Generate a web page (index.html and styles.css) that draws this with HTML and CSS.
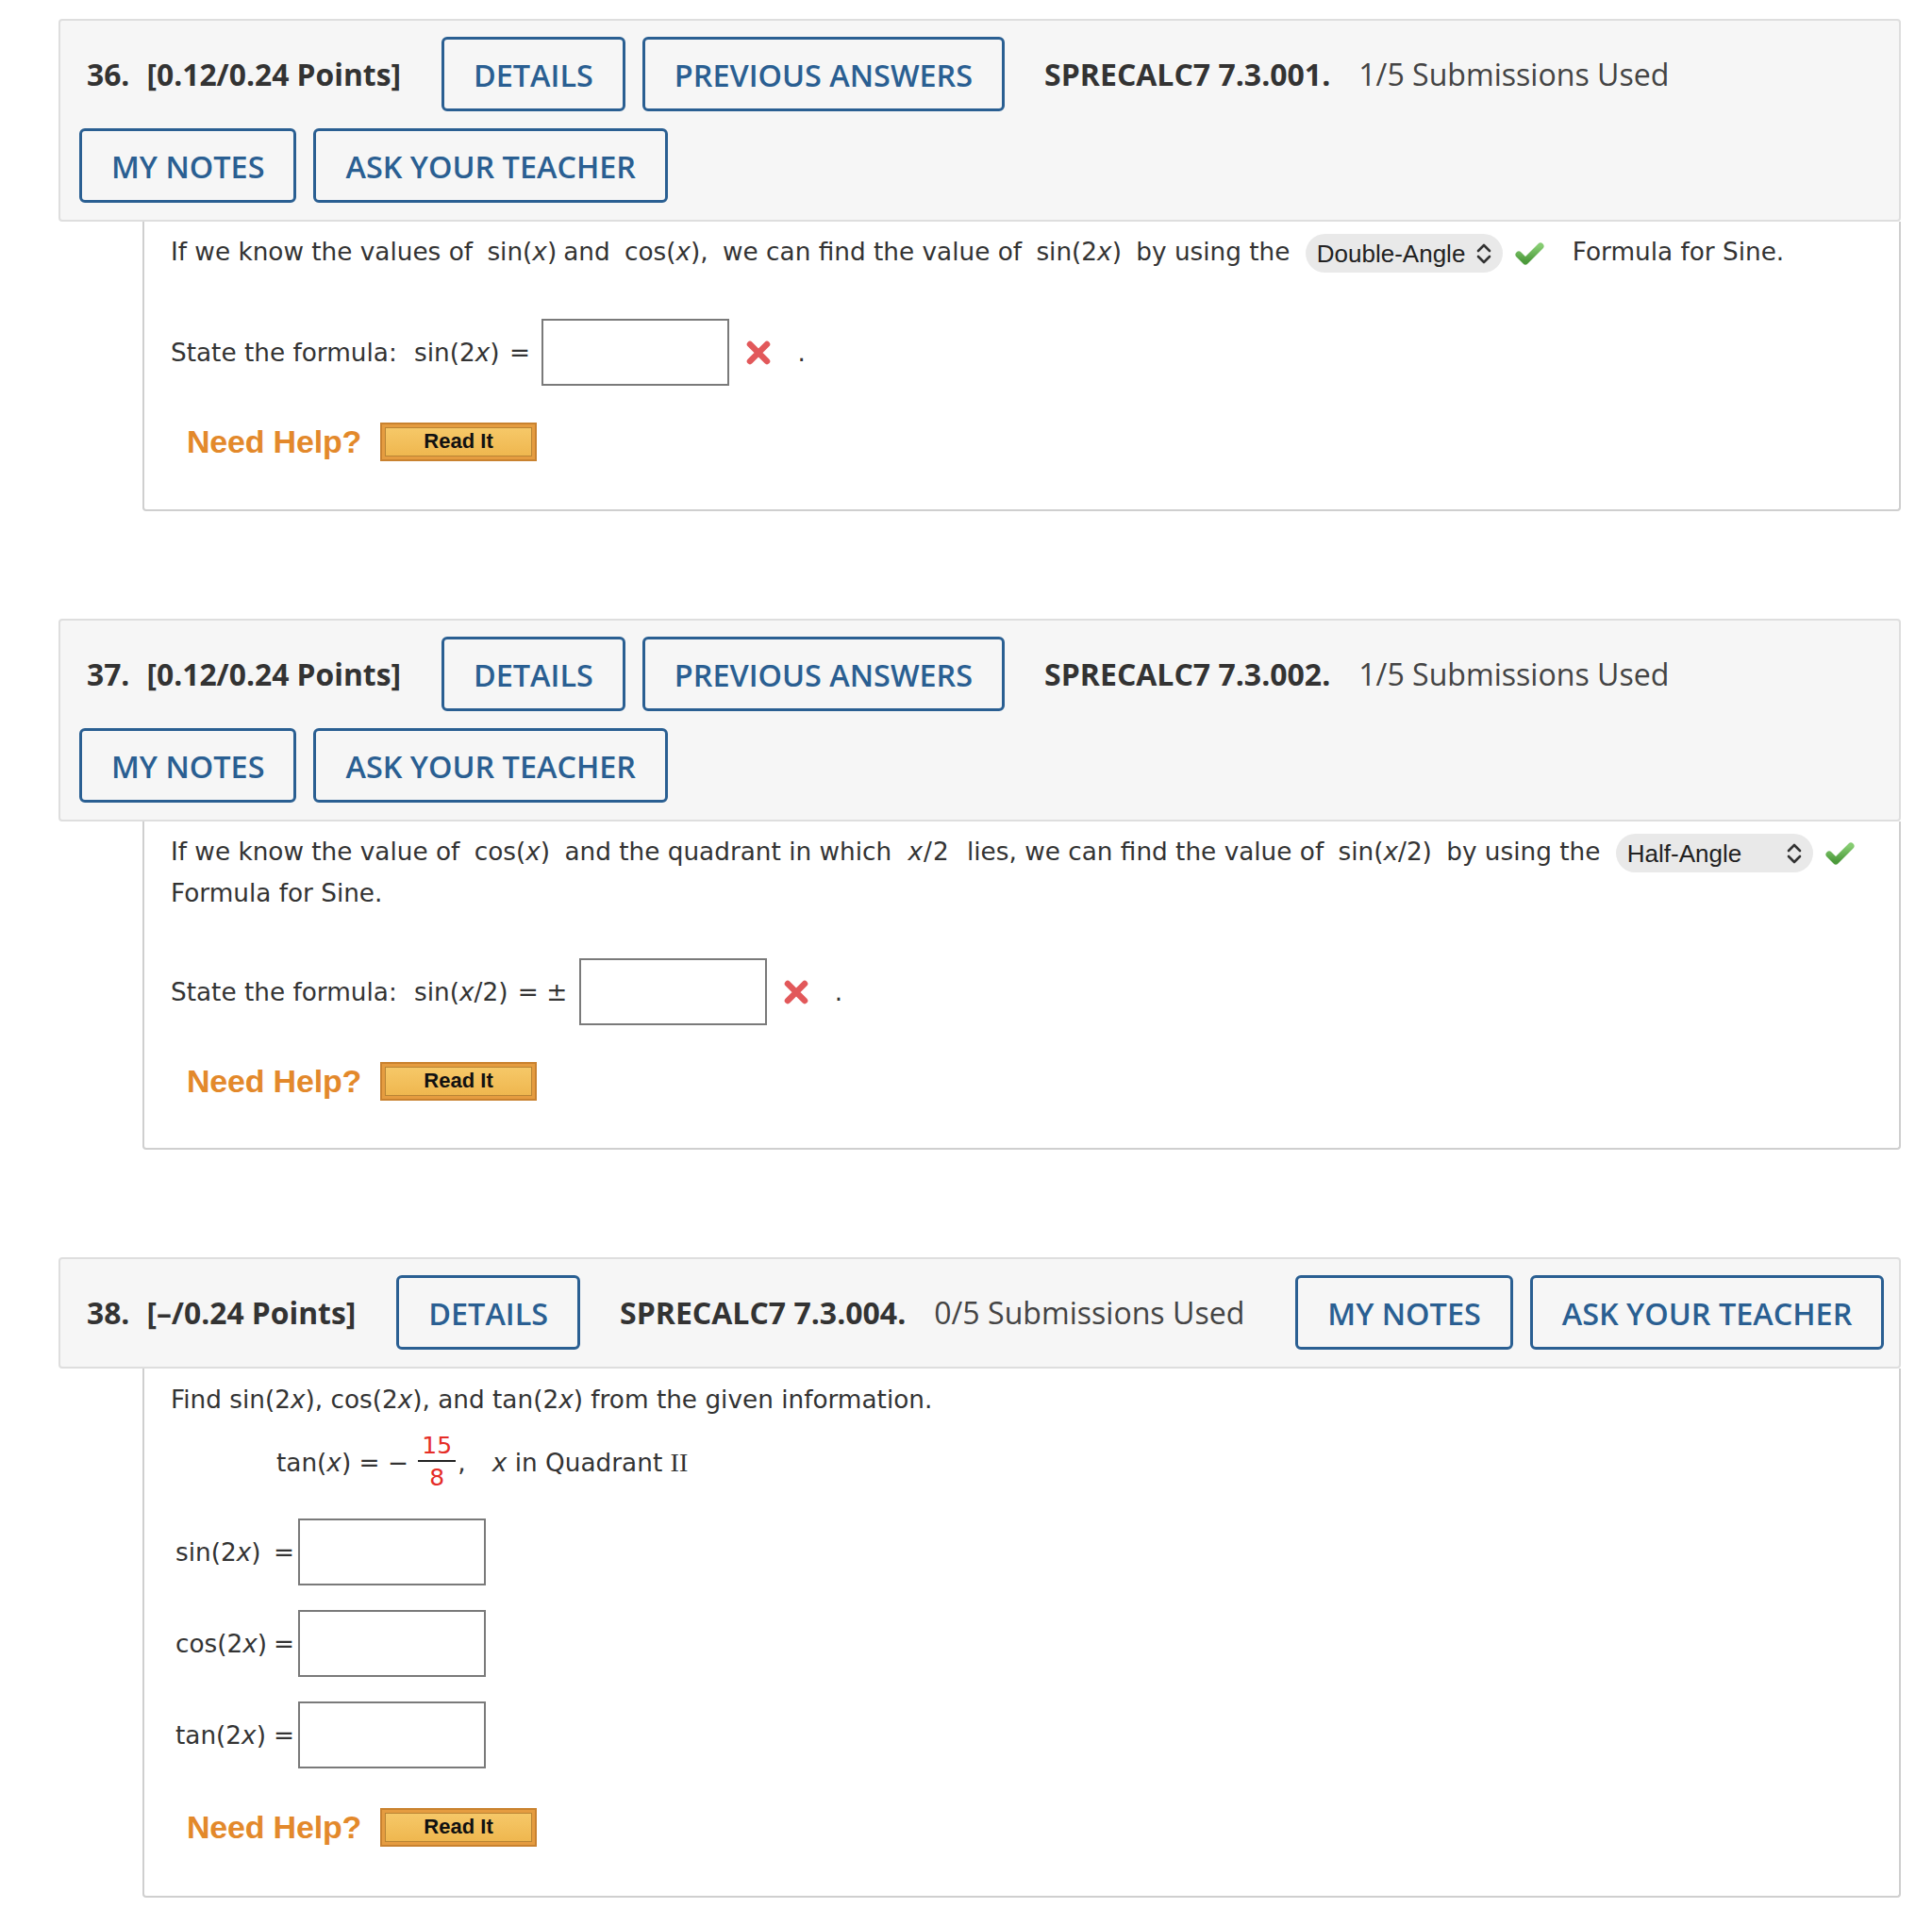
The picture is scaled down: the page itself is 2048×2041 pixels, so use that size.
FILE: index.html
```html
<!DOCTYPE html>
<html lang="en">
<head>
<meta charset="utf-8">
<title>SPRECALC7 7.3</title>
<link rel="stylesheet" href="styles.css">
</head>
<body>
<div class="page">

  <section class="question">
    <div class="qhead">
      <span class="qlabel"><b class="qnum">36.</b><b>[0.12/0.24 Points]</b></span>
      <button class="btn">DETAILS</button>
      <button class="btn">PREVIOUS ANSWERS</button>
      <span class="qcode">SPRECALC7 7.3.001.</span>
      <span class="qsubs">1/5 Submissions Used</span>
      <button class="btn">MY NOTES</button>
      <button class="btn">ASK YOUR TEACHER</button>
    </div>
    <div class="qbody q36">
      <p class="prose">If we know the values of <span class="m">sin(<i>x</i>)</span>and <span class="m">cos(<i>x</i>),</span> we can find the value of <span class="m">sin(2<i>x</i>)</span> by using the <span class="select"><span class="sel-text">Double-Angle</span><svg class="chev" viewBox="0 0 18 24" width="18" height="24"><path d="M3 9 L9 3 L15 9 M3 15 L9 21 L15 15" fill="none" stroke="#333" stroke-width="2.6" stroke-linecap="round" stroke-linejoin="round"/></svg></span><svg class="check" viewBox="0 0 32 28" width="32" height="28"><defs><linearGradient id="g1" x1="0" y1="0" x2="0" y2="1"><stop offset="0" stop-color="#86cc72"/><stop offset="1" stop-color="#4c9a3b"/></linearGradient></defs><path d="M5 15 L12 22 L28 6" fill="none" stroke="url(#g1)" stroke-width="7" stroke-linecap="round" stroke-linejoin="round"/></svg><span class="after-check">Formula for Sine.</span></p>
      <div class="formula">State the formula: <span class="m">sin(2<i>x</i>)</span> = <span class="answer"></span><svg class="xmark" viewBox="0 0 30 28" width="30" height="28"><path d="M6 5 L24 23 M24 5 L6 23" stroke="#e2585a" stroke-width="6.5" stroke-linecap="round"/></svg><span class="dot">.</span></div>
      <div class="help"><span class="need">Need Help?</span><button class="readit"><span>Read It</span></button></div>
    </div>
  </section>

  <section class="question">
    <div class="qhead">
      <span class="qlabel"><b class="qnum">37.</b><b>[0.12/0.24 Points]</b></span>
      <button class="btn">DETAILS</button>
      <button class="btn">PREVIOUS ANSWERS</button>
      <span class="qcode">SPRECALC7 7.3.002.</span>
      <span class="qsubs">1/5 Submissions Used</span>
      <button class="btn">MY NOTES</button>
      <button class="btn">ASK YOUR TEACHER</button>
    </div>
    <div class="qbody q37">
      <p class="prose">If we know the value of <span class="m">cos(<i>x</i>)</span> and the quadrant in which <span class="m wide"><i>x</i>/2</span> lies, we can find the value of <span class="m">sin(<i>x</i>/2)</span> by using the <span class="select"><span class="sel-text">Half-Angle</span><svg class="chev" viewBox="0 0 18 24" width="18" height="24"><path d="M3 9 L9 3 L15 9 M3 15 L9 21 L15 15" fill="none" stroke="#333" stroke-width="2.6" stroke-linecap="round" stroke-linejoin="round"/></svg></span><svg class="check" viewBox="0 0 32 28" width="32" height="28"><defs><linearGradient id="g2" x1="0" y1="0" x2="0" y2="1"><stop offset="0" stop-color="#86cc72"/><stop offset="1" stop-color="#4c9a3b"/></linearGradient></defs><path d="M5 15 L12 22 L28 6" fill="none" stroke="url(#g2)" stroke-width="7" stroke-linecap="round" stroke-linejoin="round"/></svg> Formula for Sine.</p>
      <div class="formula">State the formula: <span class="m">sin(<i>x</i>/2)</span> = ± <span class="answer"></span><svg class="xmark" viewBox="0 0 30 28" width="30" height="28"><path d="M6 5 L24 23 M24 5 L6 23" stroke="#e2585a" stroke-width="6.5" stroke-linecap="round"/></svg><span class="dot">.</span></div>
      <div class="help"><span class="need">Need Help?</span><button class="readit"><span>Read It</span></button></div>
    </div>
  </section>

  <section class="question">
    <div class="qhead">
      <span class="qlabel"><b class="qnum">38.</b><b>[–/0.24 Points]</b></span>
      <button class="btn">DETAILS</button>
      <span class="qcode">SPRECALC7 7.3.004.</span>
      <span class="qsubs">0/5 Submissions Used</span>
      <button class="btn">MY NOTES</button>
      <button class="btn">ASK YOUR TEACHER</button>
    </div>
    <div class="qbody q38">
      <p class="prose">Find sin(2<i>x</i>), cos(2<i>x</i>), and tan(2<i>x</i>) from the given information.</p>
      <div class="given">tan(<i>x</i>) = − <span class="frac"><span class="num">15</span><span class="den">8</span></span>, <span class="gap"></span><i>x</i> in Quadrant <span class="roman">II</span></div>
      <div class="field"><span class="flabel"><span>sin(2<i>x</i>)</span><span>=</span></span><span class="answer"></span></div>
      <div class="field"><span class="flabel"><span>cos(2<i>x</i>)</span><span>=</span></span><span class="answer"></span></div>
      <div class="field"><span class="flabel"><span>tan(2<i>x</i>)</span><span>=</span></span><span class="answer"></span></div>
      <div class="help"><span class="need">Need Help?</span><button class="readit"><span>Read It</span></button></div>
    </div>
  </section>

</div>
</body>
</html>
```

FILE: styles.css
```css
* { box-sizing: border-box; }
body {
  margin: 0;
  background: #fff;
  font-family: "DejaVu Sans", Verdana, sans-serif;
  color: #333;
}
.page {
  padding: 20px 33px 0 62px;
}
.question + .question { margin-top: 114px; }

.qhead {
  display: flex;
  flex-wrap: wrap;
  align-items: center;
  gap: 18px;
  padding: 17px 6px 18px 20px;
  background: #f6f6f6;
  border: 2px solid #dedede;
  border-radius: 4px;
  font-family: "Open Sans", sans-serif;
  color: #333;
}
.qlabel {
  font-size: 31.8px;
  padding-left: 8px;
  margin-right: 25px;
  white-space: nowrap;
}
.qnum { margin-right: 18px; }
.btn {
  height: 79px;
  padding: 0 31px;
  border: 3px solid #2a5f92;
  border-radius: 6px;
  background: #f6f6f6;
  color: #2a5f92;
  font-family: "Open Sans", sans-serif;
  font-size: 32.4px;
  font-weight: 600;
}
.qcode {
  font-size: 32px;
  font-weight: 700;
  margin-left: 24px;
}
.qsubs {
  font-size: 32.1px;
  color: #444;
  margin-left: 12px;
  margin-right: 36px;
}

.qbody {
  margin-left: 89px;
  border: 2px solid #cfcfcf;
  border-top: 0;
  border-radius: 0 0 4px 4px;
  padding: 10px 28px 0;
  font-size: 26.3px;
  color: #333;
}
.q36 { padding-bottom: 52px; }
.q37 { padding-bottom: 51px; }
.q38 { padding-top: 11px; padding-bottom: 53px; }

.prose {
  margin: 0;
  line-height: 44px;
}
.m { margin: 0 7px; }
.m.wide { margin: 0 10px 0 9px; letter-spacing: 1px; }

.select {
  display: inline-flex;
  align-items: center;
  justify-content: space-between;
  width: 209px;
  height: 41px;
  padding: 0 11px 0 12px;
  margin-left: 8px;
  border-radius: 21px;
  background: #e9e9e9;
  font-family: "Liberation Sans", Arial, sans-serif;
  font-size: 26px;
  color: #222;
  vertical-align: middle;
}
.chev { display: block; }
.check {
  vertical-align: middle;
  margin: 0 6px 0 12px;
}
.after-check { margin-left: 24px; }

.formula {
  display: flex;
  align-items: center;
  height: 71px;
  white-space: pre;
}
.formula .m { margin: 0 2px 0 10px; }
.q36 .formula { margin-top: 49px; }
.q37 .formula { margin-top: 47px; }
.answer {
  display: inline-block;
  width: 199px;
  height: 71px;
  border: 2px solid #7a7a7a;
  background: #fff;
  margin-left: 4px;
}
.xmark { margin-left: 16px; }
.dot { margin-left: 26px; }

.help {
  display: flex;
  align-items: center;
  padding-left: 17px;
  height: 40px;
  margin-top: 39px;
}
.need {
  font-family: "Liberation Sans", Arial, sans-serif;
  font-weight: 700;
  font-size: 34px;
  color: #e3892b;
  letter-spacing: -0.2px;
}
.readit {
  margin-left: 20px;
  width: 166px;
  height: 41px;
  padding: 3px;
  border: 2px solid #c9822f;
  background: #e59c40;
  display: flex;
}
.readit span {
  flex: 1;
  display: flex;
  align-items: center;
  justify-content: center;
  border: 1px solid #b98434;
  background: linear-gradient(#f6c868, #efb74f);
  font-family: "Liberation Sans", Arial, sans-serif;
  font-weight: 700;
  font-size: 22px;
  color: #111;
}

.given {
  display: flex;
  align-items: center;
  padding-left: 112px;
  margin-top: 12px;
  white-space: pre;
}
.frac {
  display: inline-flex;
  flex-direction: column;
  align-items: center;
  margin: 0 2px;
  color: #e52d27;
  font-size: 25px;
  line-height: 33px;
}
.frac .num { padding: 0 4px; border-bottom: 2px solid #222; line-height: 30px; }
.gap { width: 20px; }
.roman { font-family: "Liberation Serif", "Times New Roman", serif; font-size: 28px; }

.field {
  display: flex;
  align-items: center;
  padding-left: 5px;
  margin-top: 26px;
}
.given + .field { margin-top: 27px; }
.flabel {
  display: flex;
  justify-content: space-between;
  width: 126px;
}
.q38 .help { margin-top: 42px; }
```
